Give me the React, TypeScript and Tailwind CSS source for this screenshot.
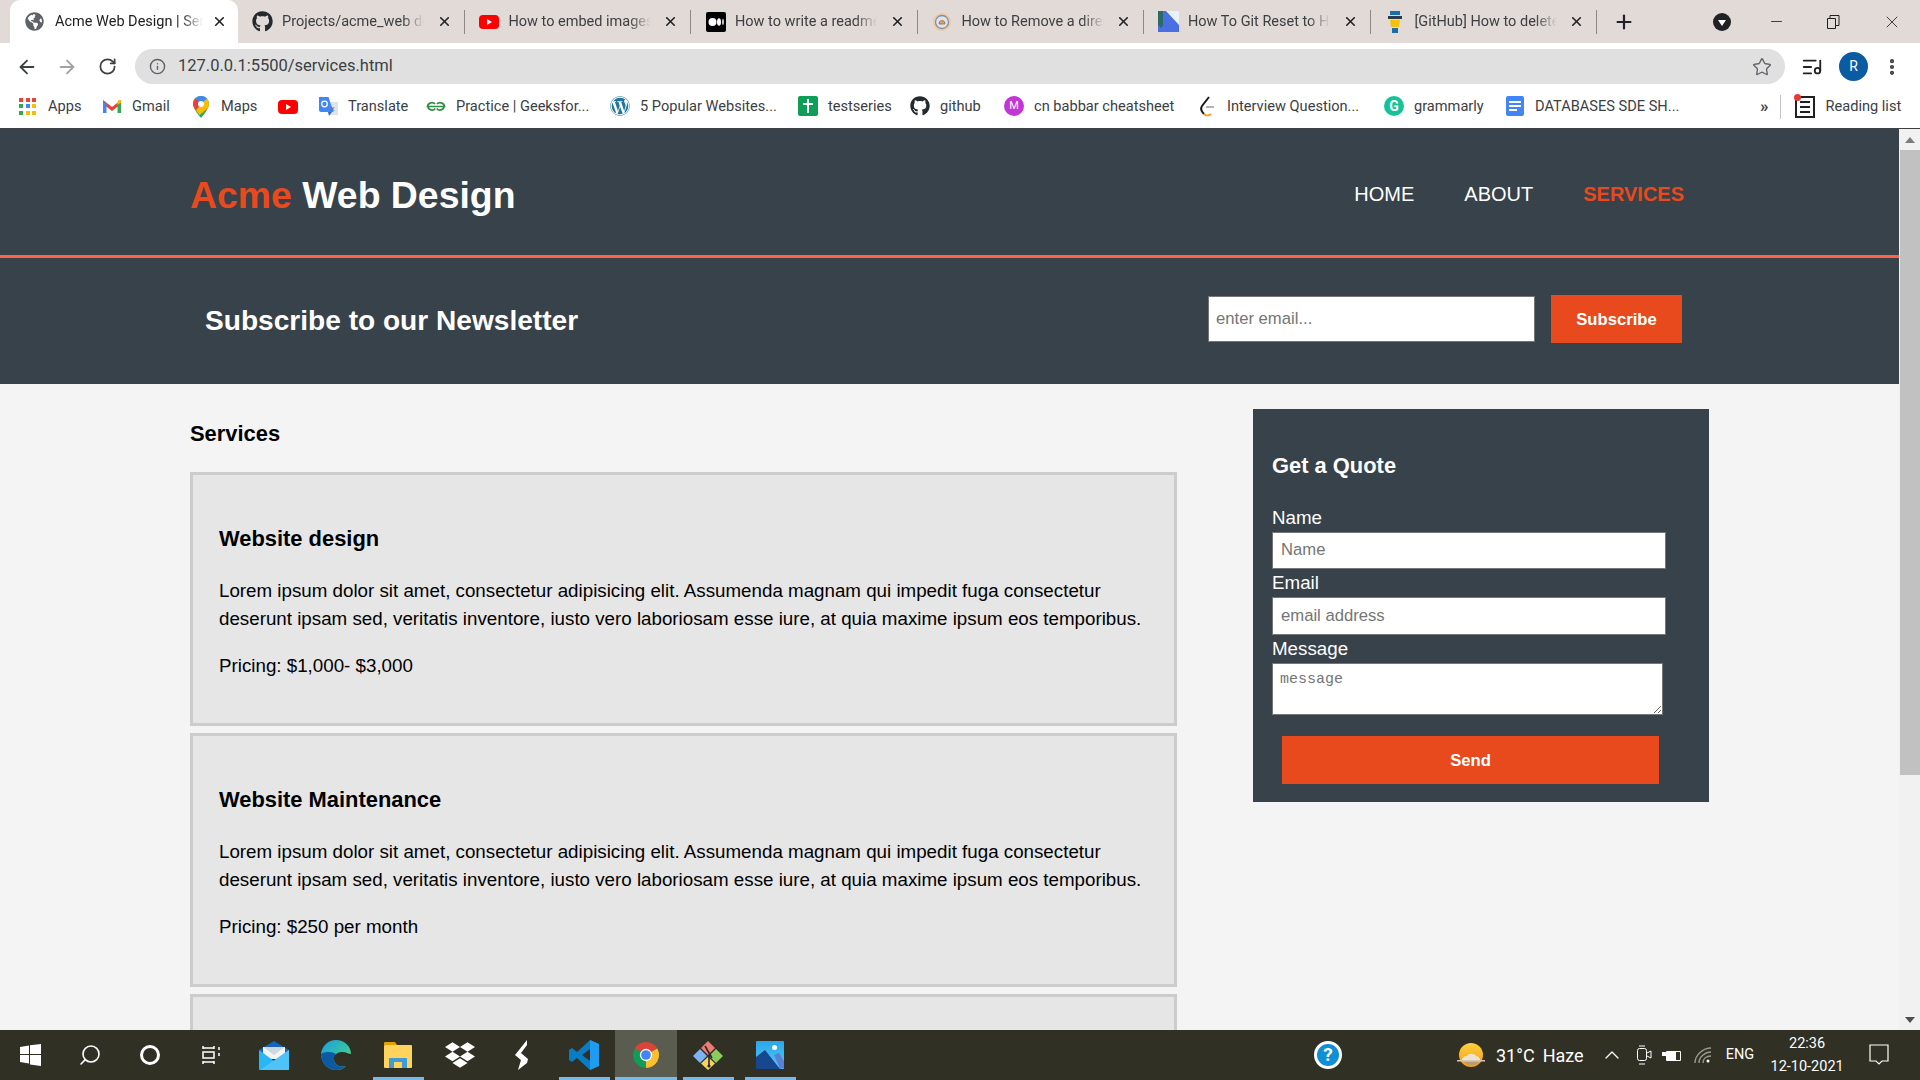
import { ArrowLeft, ArrowRight, ChevronUp, Info, ListMusic, Minus, MoreVertical, Plus, RotateCw, Search, Star, X } from "lucide-react";
import { FaGithub, FaGlobeAmericas, FaWordpress } from "react-icons/fa";
import { SiDropbox } from "react-icons/si";
import type { ReactNode } from "react";

const chromeFont = "font-['Roboto',sans-serif]";
const pageFont = "font-['Liberation_Sans',Arial,sans-serif]";

function YoutubeIcon({ size = 20 }: { size?: number }) {
  return (
    <svg width={size} height={size} viewBox="0 0 20 20">
      <rect x="0" y="3" width="20" height="14" rx="4" fill="#f00" />
      <path d="M8 7l5 3-5 3z" fill="#fff" />
    </svg>
  );
}

function GmailIcon() {
  return (
    <svg width="20" height="20" viewBox="0 0 20 20" fill="none">
      <path d="M1 4l9 7 9-7v4l-9 7-9-7z" fill="#ea4335" />
      <path d="M1 17h3.500V8L1 5z" fill="#4285f4" />
      <path d="M15.500 17H19V5l-3.500 3z" fill="#34a853" />
      <path d="M15.500 5.500L17 3.500 19 4.500V6.500l-3.500 2.500z" fill="#fbbc04" />
    </svg>
  );
}

function MapsIcon() {
  return (
    <svg width="16" height="22" viewBox="0 0 16 22">
      <path d="M8 0a8 8 0 0 0-8 8c0 5 8 14 8 14s8-9 8-14a8 8 0 0 0-8-8z" fill="#34a853" />
      <path d="M8 0a8 8 0 0 0-6 2.500L8 8l6-5.500A8 8 0 0 0 8 0z" fill="#4285f4" />
      <path d="M14 2.500L8 8l-5 6 3.500 5 8.500-7c1.500-3 1-7-1-9.500z" fill="#fbbc04" />
      <path d="M2 2.500A8 8 0 0 0 0 8c0 1.500.8 4 3 6l5-6z" fill="#ea4335" />
      <circle cx="8" cy="8" r="3" fill="#fff" />
    </svg>
  );
}

function TranslateIcon() {
  return (
    <svg width="20" height="21" viewBox="0 0 20 21">
      <path d="M9 6h11v13H11z" fill="#dfe3e8" />
      <path d="M1 1h9.500l5 15H3a2 2 0 0 1-2-2z" fill="#4285f4" />
      <circle cx="6.500" cy="8" r="2.800" fill="none" stroke="#fff" strokeWidth="1.300" />
      <text x="13" y="15" fontSize="7" fill="#5f6368" fontFamily="Liberation Sans">x</text>
      <path d="M10 16h4l-3 4z" fill="#3367d6" />
    </svg>
  );
}

function AppsIcon() {
  const colors = ["#ea4335", "#ea4335", "#ea4335", "#34a853", "#4285f4", "#fbbc04", "#34a853", "#fbbc04", "#fbbc04"];
  return (
    <div className="grid h-[17px] w-[17px] grid-cols-3 gap-[2.500px]">
      {colors.map((c, i) => (
        <span key={i} className="h-[4px] w-[4px]" style={{ backgroundColor: c }} />
      ))}
    </div>
  );
}

const tabs: { title: string; icon: ReactNode }[] = [
  { title: "Projects/acme_web design", icon: <FaGithub size={21} className="text-[#24292e]" /> },
  { title: "How to embed images", icon: <YoutubeIcon /> },
  {
    title: "How to write a readme",
    icon: (
      <svg width="20" height="20" viewBox="0 0 20 20">
        <rect width="20" height="20" rx="2" fill="#000" />
        <circle cx="6.500" cy="10" r="4" fill="#fff" />
        <ellipse cx="13" cy="10" rx="2" ry="3.800" fill="#fff" />
        <ellipse cx="17" cy="10" rx="0.800" ry="3.300" fill="#fff" />
      </svg>
    ),
  },
  {
    title: "How to Remove a directory",
    icon: (
      <svg width="20" height="20" viewBox="0 0 20 20">
        <circle cx="10" cy="10" r="9" fill="#f0c9a0" />
        <circle cx="10" cy="10" r="6.500" fill="#dfe3ea" stroke="#7f8fa6" strokeWidth="1.300" />
        <path d="M7 12a3 3.500 0 1 1 6 0z" fill="#e0a070" stroke="#8a6d4d" strokeWidth="0.800" />
      </svg>
    ),
  },
  {
    title: "How To Git Reset to HEAD",
    icon: (
      <svg width="21" height="21" viewBox="0 0 21 21">
        <rect width="21" height="21" fill="#4a6fe0" />
        <path d="M0 0h8l13 14V0z" fill="#eaf0f8" />
        <path d="M0 0h5v14l-2 3-3-3z" fill="#2b6a66" />
      </svg>
    ),
  },
  {
    title: "[GitHub] How to delete",
    icon: (
      <svg width="20" height="24" viewBox="0 0 20 24">
        <rect x="5" y="1" width="10" height="4" fill="#1b6ea8" />
        <rect x="3" y="6" width="14" height="3" fill="#283c4c" />
        <path d="M5 10h10l-1 7H6z" fill="#f4c20d" />
        <rect x="7" y="18" width="6" height="5" fill="#1b6ea8" />
      </svg>
    ),
  },
];

const bookmarks: { label: string; icon: ReactNode; width: string }[] = [
  { label: "Gmail", icon: <GmailIcon />, width: "w-[89px]" },
  { label: "Maps", icon: <MapsIcon />, width: "w-[87px]" },
  { label: "", icon: <YoutubeIcon />, width: "w-[40px]" },
  { label: "Translate", icon: <TranslateIcon />, width: "w-[108px]" },
  {
    label: "Practice | Geeksfor...",
    width: "w-[184px]",
    icon: (
      <svg width="20" height="20" viewBox="0 0 20 20" fill="none" stroke="#2f8d46" strokeWidth="1.700">
        <path d="M10 10.500H1.500c.5-4 5.500-5 7.500-2.500M10 10.500h8.500c-.5-4-5.500-5-7.500-2.500M1.800 10.500c1 4 5.500 4.500 7.500 2M18.200 10.500c-1 4-5.500 4.500-7.500 2" />
      </svg>
    ),
  },
  { label: "5 Popular Websites...", icon: <FaWordpress size={20} className="text-[#21759b]" />, width: "w-[188px]" },
  {
    label: "testseries",
    width: "w-[112px]",
    icon: (
      <svg width="20" height="20" viewBox="0 0 20 20">
        <rect x="0" width="20" height="20" rx="2" fill="#0f9d58" />
        <path d="M9 3h2v4h4v2h-4v8H9V9H5V7h4z" fill="#fff" />
      </svg>
    ),
  },
  { label: "github", icon: <FaGithub size={20} className="text-[#24292e]" />, width: "w-[94px]" },
  {
    label: "cn babbar cheatsheet",
    width: "w-[193px]",
    icon: (
      <span className={`${chromeFont} flex h-[20px] w-[20px] items-center justify-center rounded-full bg-[#c136d4] text-[11px] text-white`}>M</span>
    ),
  },
  {
    label: "Interview Question...",
    width: "w-[187px]",
    icon: (
      <svg width="20" height="22" viewBox="0 0 20 22" fill="none" strokeWidth="2">
        <path d="M12 1L5 10c-2 3 0 6 2 8" stroke="#1a1a1a" />
        <path d="M7 18c2 2 5 2 7 0" stroke="#f89f1b" />
        <path d="M9 11h8" stroke="#b3b3b3" />
      </svg>
    ),
  },
  {
    label: "grammarly",
    width: "w-[121px]",
    icon: (
      <span className={`${chromeFont} flex h-[20px] w-[20px] items-center justify-center rounded-full bg-[#15c39a] text-[14px] font-bold text-white`}>G</span>
    ),
  },
  {
    label: "DATABASES SDE SH...",
    width: "w-[190px]",
    icon: (
      <svg width="20" height="20" viewBox="0 0 20 20">
        <rect x="1" width="18" height="20" rx="2" fill="#4285f4" />
        <path d="M4 5h12v2H4zM4 9h12v2H4zM4 13h8v2H4z" fill="#fff" />
      </svg>
    ),
  },
];

function EdgeIcon() {
  return (
    <svg width="30" height="30" viewBox="0 0 30 30">
      <defs>
        <linearGradient id="edge-top" x1="0" y1="0" x2="1" y2="1">
          <stop offset="0" stopColor="#1b9de2" />
          <stop offset="0.6" stopColor="#36c5a0" />
          <stop offset="1" stopColor="#7ee05a" />
        </linearGradient>
      </defs>
      <path d="M15 0C7 0 1 6 0 14c0 9 7 16 15 16 4 0 7-1 10-4-6 2-12-1-12-7 0-3 2-5 5-5h12C30 6 23 0 15 0z" fill="url(#edge-top)" />
      <path d="M0 14c0 9 7 16 15 16 4 0 7-1 10-4-6 2-12-1-12-7 0-2 1-4 2-5-3-2-10-3-15 0z" fill="#0c59a4" />
      <path d="M13 19c0-4 3-7 8-7 4 0 7 2 9 2 0 2-1 4-3 4h-5c0-3-5-3-6 0 0 1 0 1-3 1z" fill="#2f3024" />
    </svg>
  );
}

function ChromeIcon() {
  return (
    <svg width="28" height="28" viewBox="0 0 30 30">
      <path d="M15 15L2.900 8A14 14 0 0 1 27.100 8z" fill="#db4437" />
      <path d="M15 15L27.100 8A14 14 0 0 1 15 29z" fill="#fbc02d" />
      <path d="M15 15L15 29A14 14 0 0 1 2.900 8z" fill="#0f9d58" />
      <circle cx="15" cy="15" r="6.600" fill="#fff" />
      <circle cx="15" cy="15" r="5.200" fill="#4285f4" />
    </svg>
  );
}

const taskIcons: { icon: ReactNode; active?: boolean; focused?: boolean }[] = [
  {
    icon: (
      <svg width="30" height="29" viewBox="0 0 30 29">
        <path d="M15 0l15 9v6H0V9z" fill="#1565c0" />
        <path d="M4 6h22v12H4z" fill="#f2f4f6" />
        <path d="M4 6h22L15 14z" fill="#cfd8dc" />
        <path d="M0 9l15 11 15-11v19a1 1 0 0 1-1 1H1a1 1 0 0 1-1-1z" fill="#29b6f6" />
        <path d="M30 9v19a1 1 0 0 1-1 1H1z" fill="#4fc3f7" />
      </svg>
    ),
  },
  { icon: <EdgeIcon /> },
  {
    active: true,
    icon: (
      <svg width="28" height="26" viewBox="0 0 28 26">
        <path d="M0 1a1 1 0 0 1 1-1h10l2 3H0z" fill="#e5a100" />
        <rect x="0" y="3" width="28" height="23" rx="1" fill="#ffd35c" />
        <path d="M5 26v-10h18v10h-5v-6h-8v6z" fill="#3f9ad8" />
      </svg>
    ),
  },
  { icon: <SiDropbox size={30} className="text-white" /> },
  {
    icon: (
      <svg width="14" height="30" viewBox="0 0 14 30">
        <path d="M12 0v5L6 13l7 6-1 4-9 7 3-10-6-5z" fill="#fff" />
      </svg>
    ),
  },
  {
    active: true,
    icon: (
      <svg width="30" height="30" viewBox="0 0 30 30">
        <path d="M21 0l9 4v22l-9 4L8 18l-5 4-3-2V10l3-2 5 4zM21 9l-8 6 8 6z" fill="#0a7cc4" />
        <path d="M21 0l9 4v22l-9 4z" fill="#1f9cf0" />
      </svg>
    ),
  },
  { active: true, focused: true, icon: <ChromeIcon /> },
  {
    active: true,
    icon: (
      <svg width="30" height="30" viewBox="0 0 30 30">
        <path d="M15 1l7 7-7 7-7-7z" fill="#ef7a7a" />
        <path d="M7 9l7 7-7 7-7-7z" fill="#7db2f5" />
        <path d="M23 9l7 7-7 7-7-7z" fill="#8ccc5b" />
        <path d="M15 17l7 6.500-7 6.500-7-6.500z" fill="#f6d365" />
        <path d="M12 6l7 12M16 15v11" stroke="#2b2b2b" strokeWidth="1.600" />
        <circle cx="16" cy="26" r="1.600" fill="#2b2b2b" />
      </svg>
    ),
  },
  {
    active: true,
    icon: (
      <svg width="28" height="28" viewBox="0 0 28 28">
        <defs>
          <linearGradient id="photo-sky" x1="0" y1="0" x2="0" y2="1">
            <stop offset="0" stopColor="#28a9ea" />
            <stop offset="1" stopColor="#58c6f5" />
          </linearGradient>
        </defs>
        <rect width="28" height="28" rx="1" fill="url(#photo-sky)" />
        <circle cx="18.500" cy="6.500" r="2.500" fill="#fff" />
        <path d="M18 14l5-2 5 8v7l-4 1z" fill="#5b7fd4" />
        <path d="M0 28V16l9-7 15 19z" fill="#17478f" />
      </svg>
    ),
  },
];

function Card({ title, pricing }: { title: string; pricing: string }) {
  return (
    <div className="mb-[7px] h-[254px] border-[3px] border-[#ccc] bg-[#e6e6e6] px-[26px] pt-[50px]">
      <h3 className="text-[21.9px] font-bold leading-[28px] text-black">{title}</h3>
      <p className="mt-[24px] text-[18.75px] leading-[28px] text-black">
        Lorem ipsum dolor sit amet, consectetur adipisicing elit. Assumenda magnam qui impedit fuga consectetur deserunt ipsam sed, veritatis inventore, iusto vero laboriosam esse iure, at quia maxime ipsum eos temporibus.
      </p>
      <p className="mt-[19px] text-[18.75px] leading-[28px] text-black">{pricing}</p>
    </div>
  );
}

export default function App() {
  return (
    <div className="flex h-screen w-full flex-col overflow-hidden bg-white">
      {/* tab strip */}
      <div className={`${chromeFont} flex h-[43px] shrink-0 items-center bg-[#e2dad7] pl-[10px] text-[14.5px] text-[#3c4043]`}>
        <div className="flex h-[43px] w-[228px] items-center rounded-t-[10px] bg-white pl-[15px] pr-[11px]">
          <FaGlobeAmericas size={19} className="shrink-0 text-[#5f6368]" />
          <span className="ml-[11px] w-[148px] overflow-hidden whitespace-nowrap text-[#202124] [mask-image:linear-gradient(to_right,black_85%,transparent)]">Acme Web Design | Services</span>
          <X size={15} strokeWidth={2.6} className="ml-auto text-[#202124]" />
        </div>
        {tabs.map((t) => (
          <div key={t.title} className="flex h-[24px] w-[226.500px] items-center border-r border-[#8d8784] pl-[14px] pr-[12px]">
            <span className="flex w-[21px] shrink-0 items-center justify-center">{t.icon}</span>
            <span className="ml-[9px] w-[142px] overflow-hidden whitespace-nowrap [mask-image:linear-gradient(to_right,black_85%,transparent)]">{t.title}</span>
            <X size={15} strokeWidth={2.6} className="ml-auto text-[#202124]" />
          </div>
        ))}
        <Plus size={22} strokeWidth={2.4} className="ml-[16px] text-[#202124]" />
        <span className="ml-[78px] flex h-[18px] w-[18px] items-center justify-center rounded-full bg-[#202124]">
          <span className="mt-[2px] border-x-[4px] border-t-[6px] border-x-transparent border-t-white" />
        </span>
        <Minus size={17} strokeWidth={1.2} className="ml-[37px] text-[#202124]" />
        <svg width="14" height="14" viewBox="0 0 14 14" fill="none" stroke="#202124" className="ml-[41px]">
          <path d="M1.500 3.500h8v10h-8zM4 3.500V.5h9v10h-3.500" />
        </svg>
        <X size={20} strokeWidth={1} className="ml-[42px] text-[#202124]" />
      </div>

      {/* toolbar */}
      <div className="flex h-[42px] shrink-0 items-center pt-[5px]">
        <ArrowLeft size={22} strokeWidth={2} className="ml-[16px] text-[#3c4043]" />
        <ArrowRight size={22} strokeWidth={2} className="ml-[18px] text-[#a3a3a3]" />
        <RotateCw size={19} strokeWidth={2.2} className="ml-[20px] text-[#3c4043]" />
        <div className="ml-[18px] flex h-[35px] w-[1650px] items-center rounded-full bg-[#e0e0e0] pl-[14px] pr-[13px]">
          <Info size={17} className="text-[#5f6368]" />
          <span className={`${chromeFont} ml-[12px] text-[16.5px] text-[#3c4043]`}>127.0.0.1:5500/services.html</span>
          <Star size={20} strokeWidth={1.6} className="ml-auto text-[#5f6368]" />
        </div>
        <ListMusic size={22} className="ml-[16px] text-[#202124]" />
        <span className={`${chromeFont} ml-[16px] flex h-[29px] w-[29px] items-center justify-center rounded-full bg-[#0b5ba3] text-[14px] text-white`}>R</span>
        <MoreVertical size={20} strokeWidth={3} className="ml-[14px] text-[#3c4043]" />
      </div>

      {/* bookmarks */}
      <div className={`${chromeFont} flex h-[44px] shrink-0 items-center border-b border-[#3c4043] pl-[19px] text-[14.6px] text-[#3c4043]`}>
        <div className="flex w-[83px] shrink-0 items-center gap-[12px]">
          <AppsIcon />
          <span>Apps</span>
        </div>
        {bookmarks.map((b, i) => (
          <div key={i} className={`flex ${b.width} shrink-0 items-center gap-[10px] whitespace-nowrap`}>
            <span className="flex w-[20px] shrink-0 justify-center">{b.icon}</span>
            {b.label ? <span>{b.label}</span> : null}
          </div>
        ))}
        <span className="ml-[65px] text-[17px] font-bold">»</span>
        <span className="ml-[11px] h-[24px] w-px bg-[#c4c4c4]" />
        <span className="relative ml-[14px] flex h-[22px] w-[20px] shrink-0 flex-col justify-center gap-[3px] border-2 border-[#202124] px-[3px]">
          <span className="h-[2px] bg-[#202124]" />
          <span className="h-[2px] bg-[#202124]" />
          <span className="h-[2px] bg-[#202124]" />
          <span className="absolute -left-[3px] -top-[4px] h-[7px] w-[7px] rounded-full bg-[#e53935]" />
        </span>
        <span className="ml-[11px] whitespace-nowrap">Reading list</span>
      </div>

      {/* page + scrollbar */}
      <div className="flex min-h-0 flex-1">
        <div className={`${pageFont} min-w-0 flex-1 overflow-hidden bg-[#f4f4f4]`}>
          <header className="flex h-[129px] items-center justify-between border-b-[3px] border-[#ff6347] bg-[#37424a] pl-[190px] pr-[215px] pt-[8px]">
            <h1 className="text-[37.4px] font-bold leading-none text-white">
              <span className="text-[#e8491d]">Acme</span> Web Design
            </h1>
            <nav className="flex gap-[50px] pb-[4px] text-[20px] text-white">
              <span>HOME</span>
              <span>ABOUT</span>
              <span className="font-bold text-[#e8491d]">SERVICES</span>
            </nav>
          </header>
          <section className="flex h-[126px] items-center justify-between bg-[#37424a] pl-[205px] pr-[217px]">
            <h2 className="text-[28.1px] font-bold text-white">Subscribe to our Newsletter</h2>
            <div className="flex items-center gap-[16px] pb-[4px]">
              <input readOnly placeholder="enter email..." className="h-[46px] w-[327px] border border-[#767676] bg-white px-[7px] text-[16.67px] placeholder:text-[#757575]" />
              <button className="h-[48px] w-[131px] bg-[#e8491d] text-[16.67px] font-bold text-white">Subscribe</button>
            </div>
          </section>
          <div className="flex pl-[190px] pr-[190px]">
            <main className="w-[987px] shrink-0">
              <h2 className="mb-[24px] mt-[36px] text-[21.9px] font-bold leading-[28px] text-black">Services</h2>
              <Card title="Website design" pricing="Pricing: $1,000- $3,000" />
              <Card title="Website Maintenance" pricing="Pricing: $250 per month" />
              <Card title="Website Hosting" pricing="Pricing: $25 per month" />
            </main>
            <aside className="ml-[76px] mt-[25px] h-[393px] w-[456px] shrink-0 bg-[#37424a] pl-[19px] pt-[43px] text-white">
              <h3 className="h-[28px] text-[21.9px] font-bold leading-[28px]">Get a Quote</h3>
              <label className="mt-[24px] block text-[18.75px] leading-[28px]">Name</label>
              <input readOnly placeholder="Name" className="block h-[37px] w-[394px] border border-[#767676] bg-white px-[8px] pb-[2px] text-[16.67px] placeholder:text-[#757575]" />
              <label className="block text-[18.75px] leading-[28px]">Email</label>
              <input readOnly placeholder="email address" className="block h-[38px] w-[394px] border border-[#767676] bg-white px-[8px] pb-[1px] text-[16.67px] placeholder:text-[#757575]" />
              <label className="block text-[18.75px] leading-[28px]">Message</label>
              <textarea readOnly placeholder="message" className="block h-[52px] w-[391px] border border-[#767676] bg-white px-[7px] py-[5px] font-['Liberation_Mono',monospace] text-[15px] placeholder:text-[#757575]" />
              <button className="ml-[10px] mt-[21px] h-[48px] w-[377px] bg-[#e8491d] text-[16.67px] font-bold text-white">Send</button>
            </aside>
          </div>
        </div>
        <div className="flex w-[21px] shrink-0 flex-col bg-[#f1f1f1]">
          <div className="flex h-[21px] items-center justify-center">
            <span className="border-x-[5px] border-b-[6px] border-x-transparent border-b-[#7d7d7d]" />
          </div>
          <div className="ml-[1px] h-[625px] bg-[#c1c1c1]" />
          <div className="mt-auto flex h-[21px] items-center justify-center">
            <span className="border-x-[5px] border-t-[6px] border-x-transparent border-t-[#505050]" />
          </div>
        </div>
      </div>

      {/* taskbar */}
      <div className={`${chromeFont} flex h-[50px] shrink-0 items-center bg-[#303024] text-white`}>
        <div className="flex w-[60px] justify-center">
          <svg width="21" height="22" viewBox="0 0 21 22" fill="#fff">
            <path d="M0 3l9-1.500V10H0zM10 1.300L21 0v10H10zM0 11h9v8.500L0 18zM10 11h11v11l-11-1.500z" />
          </svg>
        </div>
        <div className="flex w-[60px] justify-center">
          <Search size={24} strokeWidth={1.6} className="-scale-x-100" />
        </div>
        <div className="flex w-[60px] justify-center">
          <span className="h-[20px] w-[20px] rounded-full border-[3px] border-white" />
        </div>
        <div className="flex w-[63px] justify-center">
          <svg width="20" height="20" viewBox="0 0 20 20" fill="none" stroke="#fff" strokeWidth="1.5">
            <path d="M1 3h11M1 1v3M12 1v3M1 7h11v6H1zM1 17h11M1 16v3M12 16v3M17 2v3M17 8v3" />
          </svg>
        </div>
        {taskIcons.map((t, i) => (
          <div key={i} className={`relative flex h-[50px] w-[62px] items-center justify-center ${t.focused ? "bg-[#5b5c50]" : ""}`}>
            {t.icon}
            {t.active ? <span className={`absolute bottom-0 h-[3px] bg-[#76b9ed] ${t.focused ? "w-[62px]" : "w-[51px]"}`} /> : null}
          </div>
        ))}
        <span className="ml-[513px] flex h-[28px] w-[28px] items-center justify-center rounded-full border-[3px] border-white bg-[#0f8fd6] text-[19px] font-bold">?</span>
        <svg width="28" height="26" viewBox="0 0 28 26" className="ml-[115px]">
          <defs>
            <linearGradient id="sun" x1="0" y1="0" x2="0" y2="1">
              <stop offset="0" stopColor="#ffd23f" />
              <stop offset="1" stopColor="#f59a12" />
            </linearGradient>
          </defs>
          <circle cx="14" cy="13" r="12" fill="url(#sun)" />
          <path d="M0 18h28v1.500H0z" fill="#d8c7ae" />
          <path d="M5 18c0-3 3-4 5-4 1-3 8-3 9 0 2 0 4 2 4 4z" fill="#efe3d0" />
          <path d="M7 20h15c-1 2-3 3-7 3s-7-1-8-3z" fill="#b99a78" />
        </svg>
        <span className="ml-[11px] whitespace-nowrap text-[18px]">31°C</span>
        <span className="ml-[8px] text-[18px]">Haze</span>
        <ChevronUp size={24} strokeWidth={1.3} className="ml-[16px]" />
        <svg width="16" height="22" viewBox="0 0 16 22" fill="none" stroke="#fff" className="ml-[12px]">
          <rect x="1.500" y="4.500" width="9" height="12" rx="2" />
          <path d="M11 9l4-2v7l-4-2M3 2h6M3 20h6" />
        </svg>
        <svg width="20" height="14" viewBox="0 0 20 14" className="ml-[10px]" fill="none" stroke="#fff">
          <path d="M4.500 3.500h14v9h-14z" />
          <path d="M5 4h9v8H5zM0 4h4v4H0z" fill="#fff" stroke="none" />
        </svg>
        <svg width="20" height="20" viewBox="0 0 20 20" fill="none" stroke="#9a9a90" strokeWidth="1.400" className="ml-[11px]">
          <path d="M2 18C2 10 10 3 18 3M6 18c0-6 6-11 12-11" />
          <path d="M10 18c0-4 3-7 8-7" />
          <circle cx="15" cy="16" r="1.500" fill="#fff" stroke="none" />
        </svg>
        <span className="ml-[13px] text-[14.500px]">ENG</span>
        <div className="ml-[8px] flex w-[90px] flex-col items-center text-[14.500px] leading-[23px]">
          <span>22:36</span>
          <span>12-10-2021</span>
        </div>
        <svg width="20" height="22" viewBox="0 0 20 22" fill="none" stroke="#fff" strokeWidth="1.200" className="ml-[17px]">
          <path d="M1 1h18v16h-6l-3 3-3-3H1z" />
        </svg>
      </div>
    </div>
  );
}
